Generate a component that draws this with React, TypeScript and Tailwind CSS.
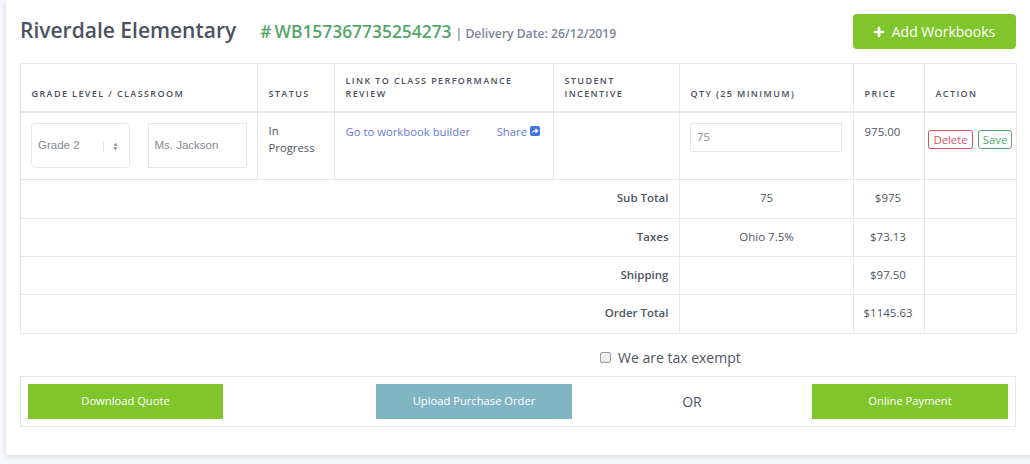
import React from 'react';
import { Plus } from 'lucide-react';

const th = 'border border-[#e6e8ee] border-b-2 px-[10.5px] pb-[11px] pt-2 align-bottom text-left text-[9px] font-semibold uppercase leading-[13px] tracking-[1.4px] text-[#4a4f5c]';
const td = 'border border-[#e6e8ee] px-[10.5px]';

const totals = [
    { label: 'Sub Total', qty: '75', price: '$975', h: 'h-[39px]', pad: 'pb-[2px]' },
    { label: 'Taxes', qty: 'Ohio 7.5%', price: '$73.13', h: 'h-[38px]', pad: 'pb-[1px]' },
    { label: 'Shipping', qty: '', price: '$97.50', h: 'h-[38px]', pad: 'pb-[1px]' },
    { label: 'Order Total', qty: '', price: '$1145.63', h: 'h-[39px]', pad: 'pb-[2px]' },
];

export default function App() {
    return (
        <div className="h-[464px] w-[1030px] overflow-hidden bg-[#f6f8fc] font-['Open_Sans',sans-serif] text-[#505562]">
            <div className="h-[455px] w-[1040px] ml-[6px] bg-white pl-[14px] pt-[14px] shadow-[0_1px_6px_rgba(60,70,90,0.2)]">
                <div className="w-[996px]">
                    {/* Header */}
                    <div className="flex h-[49px] items-start justify-between">
                        <div className="flex items-baseline pt-[1px]">
                            <span className="text-[21px] font-semibold leading-[30px] text-[#4c5260]">Riverdale Elementary</span>
                            <span className="ml-6 text-[17.4px] font-semibold text-[#56a56b]"><span className="mr-[3px]">#</span>WB157367735254273</span>
                            <span className="ml-[4px] text-[12.2px] font-semibold text-[#7e8399]">| Delivery Date: 26/12/2019</span>
                        </div>
                        <button className="flex h-[35px] w-[163px] items-center justify-center gap-[6px] rounded-[4px] bg-[#7fc52b] pr-[2px] text-[14px] text-white">
                            <Plus className="h-[14px] w-[14px]" strokeWidth={4.5} />
                            Add Workbooks
                        </button>
                    </div>

                    {/* Order table */}
                    <table className="w-[996px] table-fixed border-collapse">
                        <colgroup>
                            <col className="w-[237px]" />
                            <col className="w-[77px]" />
                            <col className="w-[219px]" />
                            <col className="w-[126px]" />
                            <col className="w-[174px]" />
                            <col className="w-[71px]" />
                            <col className="w-[92px]" />
                        </colgroup>
                        <thead>
                            <tr className="h-[48px]">
                                <th className={th}>Grade Level / Classroom</th>
                                <th className={th}>Status</th>
                                <th className={th}>Link to class performance review</th>
                                <th className={th}>Student Incentive</th>
                                <th className={th}>Qty (25 minimum)</th>
                                <th className={th}>Price</th>
                                <th className={th}>Action</th>
                            </tr>
                        </thead>
                        <tbody>
                            <tr className="h-[68px]">
                                <td className="border border-[#e6e8ee] pl-[10px] pr-[10.5px] align-top">
                                    <div className="flex justify-between pt-[10px] font-['Liberation_Sans',sans-serif] text-[11.5px] text-[#85888f]">
                                        <div className="flex h-[45px] w-[99px] items-center rounded-[4px] border border-[#e6e8ee] pl-[6px] pt-[2px]">
                                            <span className="w-[65px]">Grade 2</span>
                                            <span className="h-[11px] border-l border-[#e3e4e8]" />
                                            <svg viewBox="0 0 6 10" className="ml-[9px] h-[9px] w-[5px]">
                                                <path d="M3 0.5L5.6 4H0.4ZM3 9.5L0.4 6H5.6Z" fill="#8a8d94" />
                                            </svg>
                                        </div>
                                        <div className="flex h-[45px] w-[99px] items-center border border-[#e6e8ee] pl-[6px] pt-[2px]">Ms. Jackson</div>
                                    </div>
                                </td>
                                <td className={`${td} pt-[9px] align-top text-[11.3px] leading-[17px]`}>In Progress</td>
                                <td className={`${td} pr-[13px] pt-[10px] align-top text-[11.3px] leading-[17px] text-[#6678e4]`}>
                                    <div className="flex justify-between">
                                        <span>Go to workbook builder</span>
                                        <span className="flex items-center gap-[3px]">
                                            Share
                                            <svg viewBox="0 0 10 10" className="h-[10px] w-[10px]">
                                                <rect width="10" height="10" rx="2" fill="#3f73e0" />
                                                <path d="M1.8 7.8C2.1 5 3.6 3.9 5.5 3.9V2L8.8 4.8 5.5 7.4V5.6C4 5.6 2.8 6.1 1.8 7.8Z" fill="#fff" />
                                            </svg>
                                        </span>
                                    </div>
                                </td>
                                <td className={td} />
                                <td className="border border-[#e6e8ee] pl-[10px] pr-[11px] pt-[10px] align-top">
                                    <div className="flex h-[29px] items-center border border-[#e6e8ee] pl-[6px] text-[11.3px] text-[#85888f]">75</div>
                                </td>
                                <td className={`${td} pt-[10px] align-top text-[11.5px] leading-[17px]`}>975.00</td>
                                <td className="border border-[#e6e8ee] pl-[3px] pt-[17px] align-top">
                                    <div className="flex gap-[5px] text-[11.3px] leading-[17px]">
                                        <span className="flex h-[19px] w-[45px] items-center justify-center rounded-[3px] border border-[#d9545f] text-[#d9545f]">Delete</span>
                                        <span className="flex h-[19px] w-[34px] items-center justify-center rounded-[3px] border border-[#56a56b] text-[#56a56b]">Save</span>
                                    </div>
                                </td>
                            </tr>
                            {totals.map((row) => (
                                <tr key={row.label} className={row.h}>
                                    <td colSpan={4} className={`${td} ${row.pad} text-right text-[11.5px] font-semibold text-[#505562]`}>{row.label}</td>
                                    <td className={`${td} ${row.pad} text-center text-[11.5px]`}>{row.qty}</td>
                                    <td className={`border border-[#e6e8ee] pl-[9.5px] pr-[11.5px] ${row.pad} text-center text-[11.5px]`}>{row.price}</td>
                                    <td className={td} />
                                </tr>
                            ))}
                        </tbody>
                    </table>

                    {/* Tax exemption */}
                    <div className="flex h-[42px] items-center pl-[580px] pt-[5px]">
                        <span className="h-[11px] w-[11px] rounded-[2px] border border-[#9a9ca1] bg-[#eeeeee]" />
                        <span className="ml-[7px] text-[14px] text-[#505562]">We are tax exempt</span>
                    </div>

                    {/* Actions */}
                    <div className="flex h-[51px] items-center border border-[#e6e8ee] px-[7px] pb-[1px]">
                        <button className="h-[35px] w-[195px] bg-[#7fc52b] text-[11.2px] text-white">Download Quote</button>
                        <button className="ml-[153px] h-[35px] w-[196px] bg-[#80b6c4] text-[11.2px] text-white">Upload Purchase Order</button>
                        <span className="w-[240px] text-center text-[14px] text-[#505562]">OR</span>
                        <button className="h-[35px] w-[196px] bg-[#7fc52b] text-[11.2px] text-white">Online Payment</button>
                    </div>
                </div>
            </div>
        </div>
    );
}
